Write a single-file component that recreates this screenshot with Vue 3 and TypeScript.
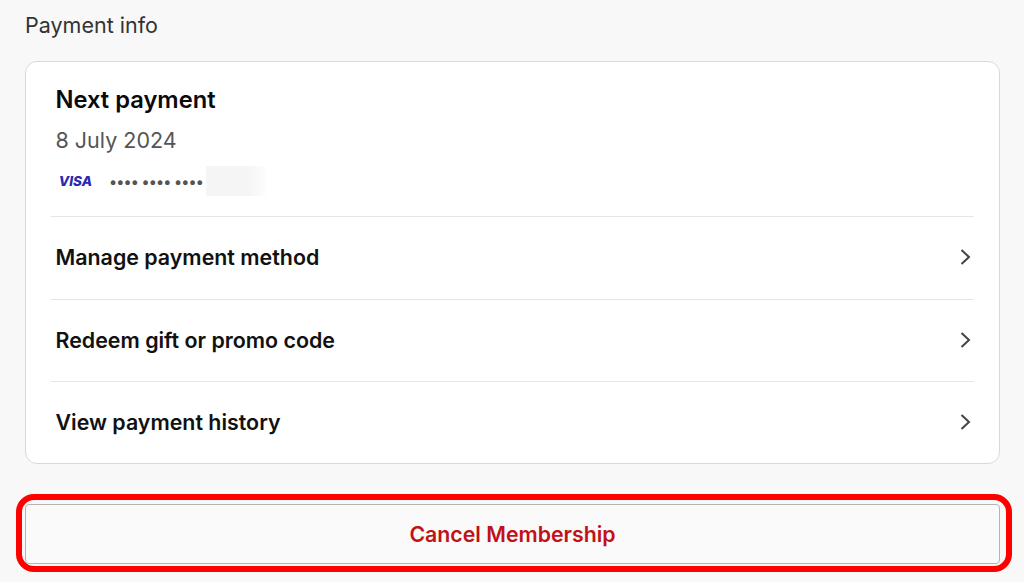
<script setup lang="ts">
const links = ['Manage payment method', 'Redeem gift or promo code', 'View payment history']
</script>

<template>
  <main class="page">
    <h2 class="section-title">Payment info</h2>

    <section class="card">
      <div class="summary">
        <h3 class="summary-title">Next payment</h3>
        <p class="summary-date">8 July 2024</p>
        <div class="method">
          <span class="visa">VISA</span>
          <span class="dots">•••• •••• ••••</span>
          <span class="redacted"></span>
        </div>
      </div>

      <a v-for="link in links" :key="link" class="row" href="#">
        <span>{{ link }}</span>
        <svg class="chevron" viewBox="0 0 12 18" width="12" height="18" fill="none" aria-hidden="true">
          <path d="M1.5 2l7.5 7-7.5 7" stroke="#444" stroke-width="2" />
        </svg>
      </a>
    </section>

    <div class="highlight">
      <button class="cancel" type="button">Cancel Membership</button>
    </div>
  </main>
</template>

<style scoped>
.page {
  width: 1024px;
  height: 582px;
  box-sizing: border-box;
  padding: 12px 0 0 25px;
  overflow: hidden;
  background: #f8f8f8;
  font-family: Inter, "Liberation Sans", sans-serif;
}
.section-title {
  margin: 0 0 23px;
  font-size: 21.5px;
  line-height: 26px;
  font-weight: 400;
  color: #333;
}
.card {
  box-sizing: border-box;
  width: 975px;
  height: 403px;
  padding: 0 25px;
  border: 1px solid #d9d9d9;
  border-radius: 12px;
  background: #fff;
}
.summary {
  height: 154px;
  box-sizing: border-box;
  padding: 23px 4.5px 0;
}
.summary-title {
  margin: 0;
  font-size: 23.7px;
  line-height: 30px;
  font-weight: 600;
  color: #0a0a0a;
}
.summary-date {
  margin: 10px 0 0;
  font-size: 21.5px;
  line-height: 30px;
  font-weight: 400;
  color: #555;
}
.method {
  display: flex;
  align-items: center;
  height: 30px;
  margin-top: 11px;
}
.visa {
  width: 40px;
  font-size: 13.5px;
  font-weight: 800;
  font-style: italic;
  text-align: center;
  color: #2a2ab0;
}
.dots {
  margin-left: 14px;
  font-size: 15px;
  font-weight: 700;
  letter-spacing: 0.1px;
  white-space: pre;
  color: #555;
}
.redacted {
  width: 60px;
  height: 30px;
  margin-left: 3px;
  background: linear-gradient(90deg, #f5f5f5 70%, #fdfdfd);
}
.row {
  display: flex;
  align-items: center;
  justify-content: space-between;
  box-sizing: border-box;
  height: 82.5px;
  padding: 0 2px 1px 4.5px;
  border-top: 1px solid #e6e6e6;
  font-size: 21.4px;
  font-weight: 600;
  color: #111;
  text-decoration: none;
}
.highlight {
  box-sizing: border-box;
  width: 996px;
  height: 78px;
  margin: 30px 0 0 -9px;
  padding: 4px 6px 2px 3px;
  border: 6px solid #f00;
  border-radius: 18px;
}
.cancel {
  display: block;
  width: 100%;
  height: 100%;
  border: 1px solid #b4b4b4;
  border-radius: 4px;
  background: #fafafa;
  font: 600 21.3px Inter, "Liberation Sans", sans-serif;
  color: #c11119;
}
</style>
